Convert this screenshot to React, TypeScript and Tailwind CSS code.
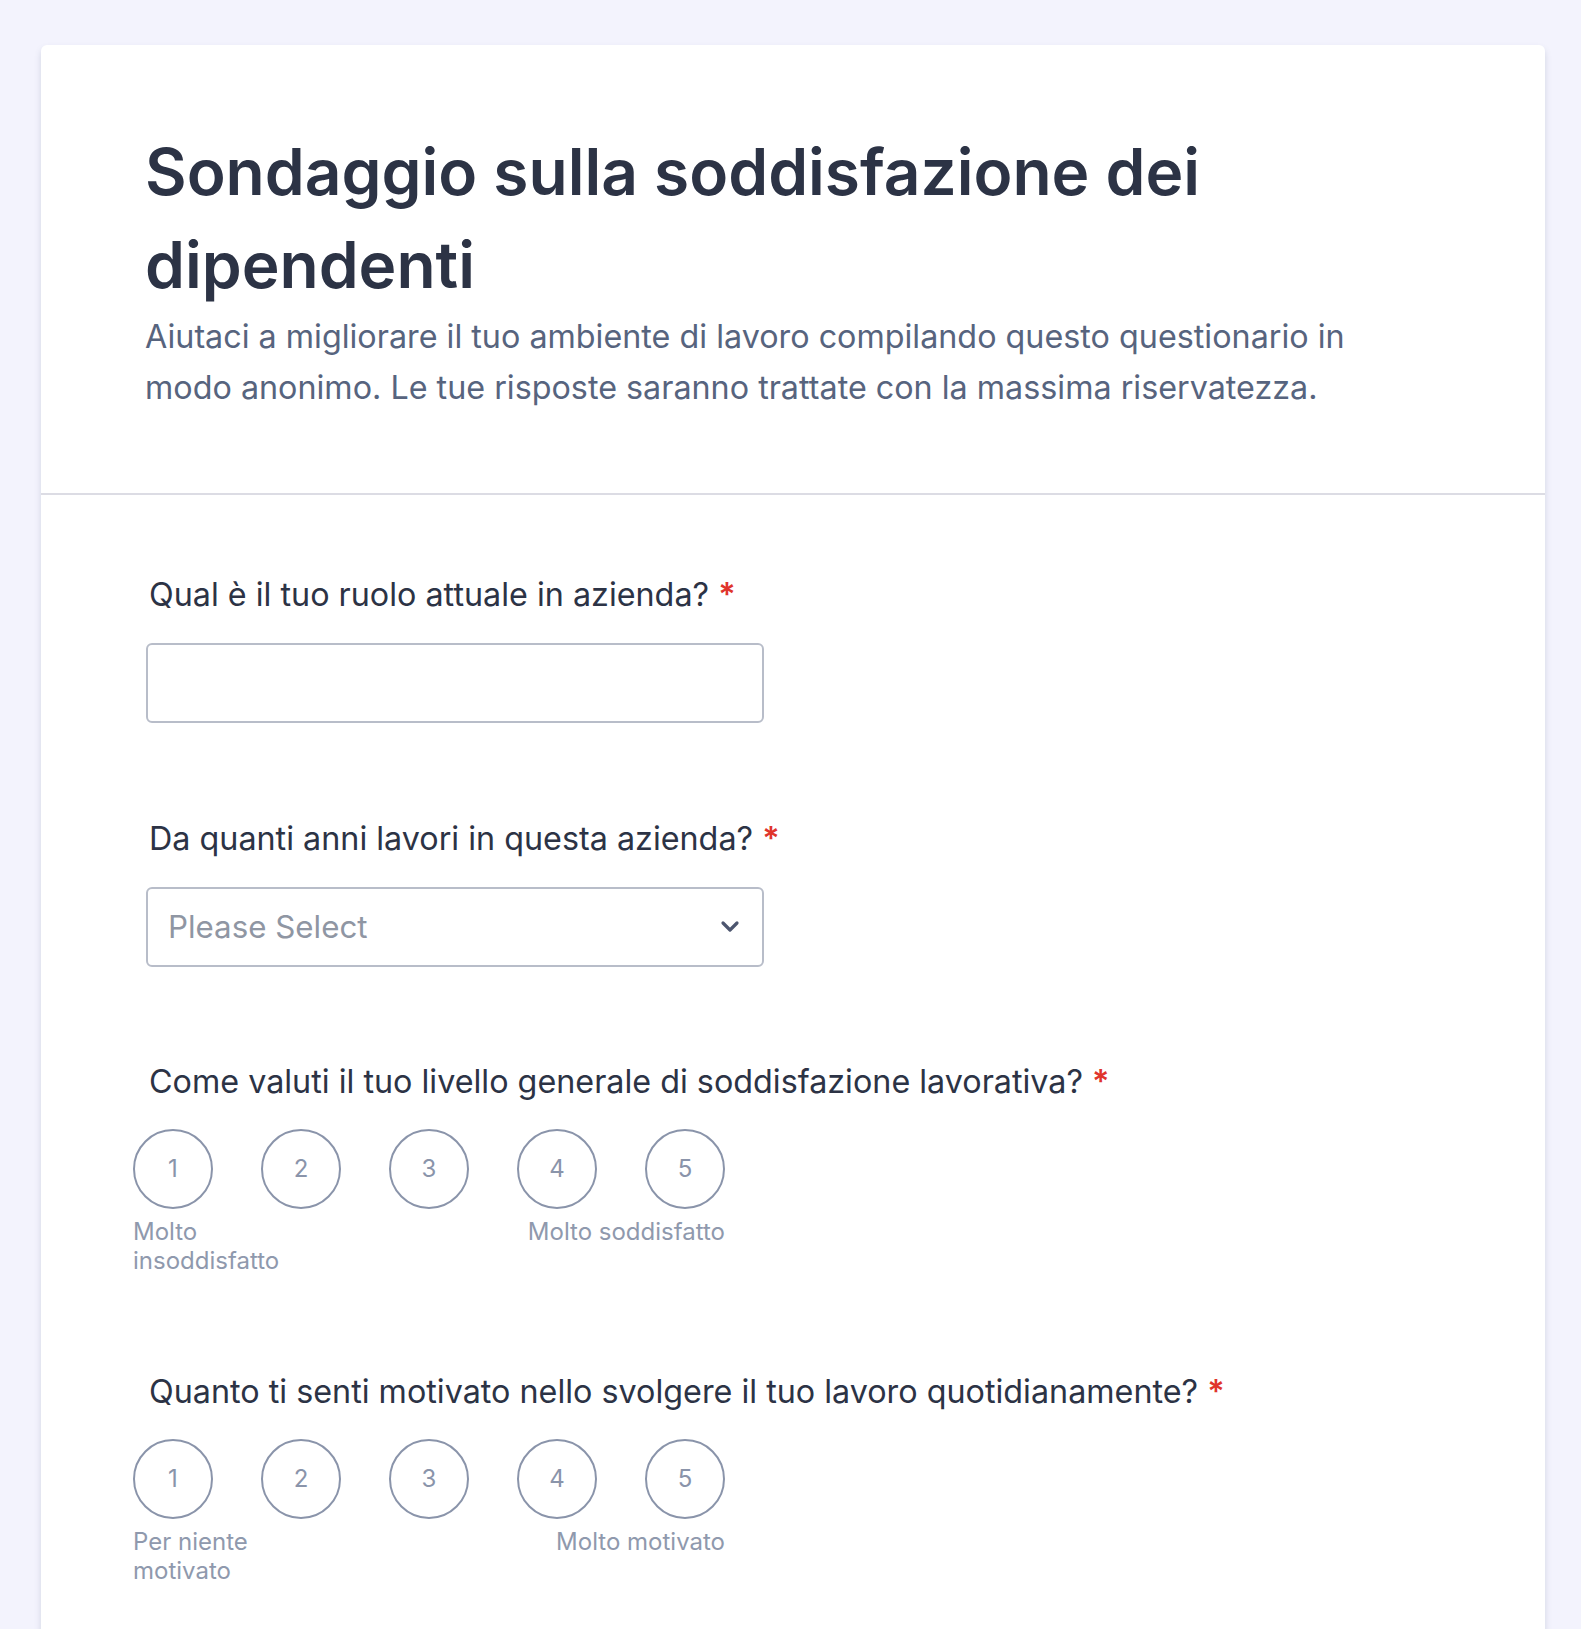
const TITLE = "Sondaggio sulla soddisfazione dei dipendenti";
const SUBTITLE =
  "Aiutaci a migliorare il tuo ambiente di lavoro compilando questo questionario in modo anonimo. Le tue risposte saranno trattate con la massima riservatezza.";

function Label({ text }: { text: string }) {
  return (
    <div className="pl-[3px] text-[32.3px] leading-[36px] text-[#2c3345]">
      {text} <span className="font-semibold text-[#e0342c]">*</span>
    </div>
  );
}

function Rating({ low, high }: { low: string; high: string }) {
  return (
    <div className="-ml-[13px] mt-[29px] w-[592px]">
      <div className="flex gap-[48px]">
        {[1, 2, 3, 4, 5].map((n) => (
          <div
            key={n}
            className="grid h-[80px] w-[80px] place-items-center rounded-full border-2 border-[#8a94aa] text-[24px] text-[#8a94aa]"
          >
            {n}
          </div>
        ))}
      </div>
      <div className="mt-[8px] flex justify-between text-[24px] leading-[29px] text-[#8f99ad]">
        <span className="w-[208px]">{low}</span>
        <span className="w-[208px] text-right">{high}</span>
      </div>
    </div>
  );
}

export default function App() {
  return (
    <div
      className="min-h-screen bg-[#f3f3fd] pl-[41px] pr-[36px] pt-[45px]"
      style={{ fontFamily: "Inter, 'Noto Sans', sans-serif" }}
    >
      <div className="rounded-t-[6px] bg-white pb-[120px] shadow-[0_4px_6px_rgba(87,100,126,0.21)]">
        {/* intestazione */}
        <div className="border-b-2 border-[#dcdce4] px-[104px] pb-[80px] pt-[80px]">
          <h1 className="text-[64px] font-semibold leading-[93px] text-[#2c3345]">{TITLE}</h1>
          <p className="max-w-[1250px] text-[32.3px] leading-[51px] text-[#57647e]">{SUBTITLE}</p>
        </div>

        <div className="px-[105px] pt-[82px]">
          {/* 1 */}
          <div>
            <Label text="Qual è il tuo ruolo attuale in azienda?" />
            <div className="mt-[30px] h-[80px] w-[618px] rounded-[6px] border-2 border-[#b8bdc9]" />
          </div>

          {/* 2 */}
          <div className="mt-[98px]">
            <Label text="Da quanti anni lavori in questa azienda?" />
            <div className="mt-[30px] flex h-[80px] w-[618px] items-center justify-between rounded-[6px] border-2 border-[#b8bdc9] pl-[20px] pr-[22px]">
              <span className="text-[31.3px] text-[#8f96a3]">Please Select</span>
              <svg width="20" height="14" viewBox="0 0 20 14" fill="none">
                <polyline
                  points="3,3 10,10 17,3"
                  stroke="#4d566f"
                  strokeWidth="3.2"
                  strokeLinecap="round"
                  strokeLinejoin="round"
                />
              </svg>
            </div>
          </div>

          {/* 3 */}
          <div className="mt-[97px]">
            <Label text="Come valuti il tuo livello generale di soddisfazione lavorativa?" />
            <Rating low="Molto insoddisfatto" high="Molto soddisfatto" />
          </div>

          {/* 4 */}
          <div className="mt-[99px]">
            <Label text="Quanto ti senti motivato nello svolgere il tuo lavoro quotidianamente?" />
            <Rating low="Per niente motivato" high="Molto motivato" />
          </div>
        </div>
      </div>
    </div>
  );
}
